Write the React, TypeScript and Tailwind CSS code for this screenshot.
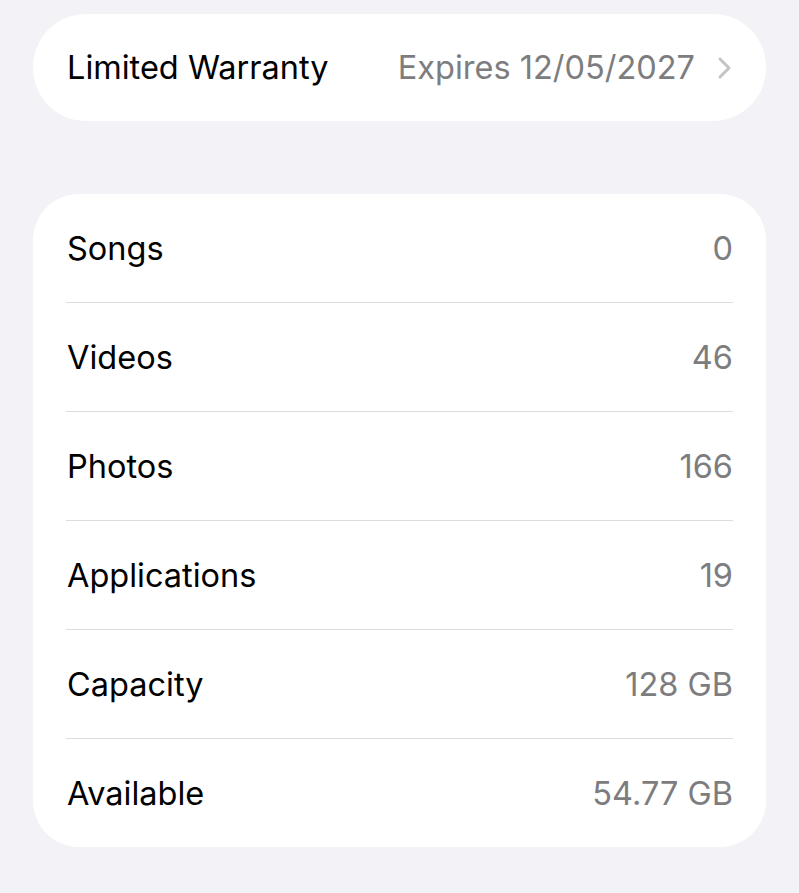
import React from 'react';

const rows = [
  { label: 'Songs', value: '0' },
  { label: 'Videos', value: '46' },
  { label: 'Photos', value: '166' },
  { label: 'Applications', value: '19' },
  { label: 'Capacity', value: '128 GB' },
  { label: 'Available', value: '54.77 GB' },
];

const Chevron = () => (
  <svg width="16" height="24" viewBox="0 0 16 24" fill="none" className="ml-[22px]">
    <path d="M3 3 L12 12 L3 21" stroke="#c4c4c7" strokeWidth="3" strokeLinecap="round" strokeLinejoin="round" />
  </svg>
);

export default function App() {
  return (
    <div
      className="min-h-screen bg-[#f2f2f7] px-[33px] pt-[14px] text-[32.5px] text-black"
      style={{ fontFamily: 'Inter, "Liberation Sans", sans-serif' }}
    >
      {/* Warranty */}
      <div className="flex h-[107px] items-center justify-between rounded-[53px] bg-white pl-[34px] pr-[33px]">
        <span className="pt-[2px]">Limited Warranty</span>
        <div className="flex items-center">
          <span className="pt-[2px] text-[#7d7d80]">Expires 12/05/2027</span>
          <Chevron />
        </div>
      </div>

      {/* Storage info */}
      <div className="mt-[73px] rounded-[46px] bg-white px-[33px]">
        {rows.map((r, i) => (
          <div key={r.label}>
            {i > 0 && <div className="h-px bg-[#dcdce0]" />}
            <div className="flex h-[108px] items-center justify-between pl-[1px] pt-[3px]">
              <span>{r.label}</span>
              <span className="text-[#7d7d80]">{r.value}</span>
            </div>
          </div>
        ))}
      </div>
    </div>
  );
}
